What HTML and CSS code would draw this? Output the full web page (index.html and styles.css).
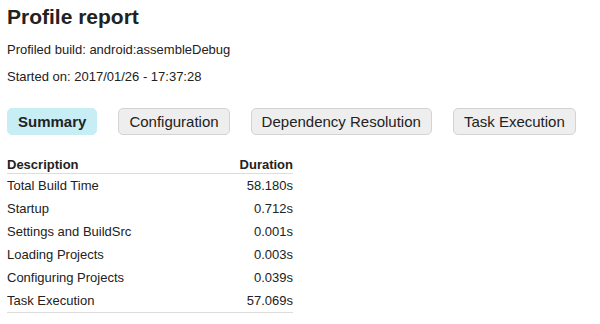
FILE: index.html
```html
<!DOCTYPE html>
<html lang="en">
<head>
  <meta charset="UTF-8" />
  <title>Profile report</title>
  <link rel="stylesheet" href="styles.css">
</head>
<body>
  <div class="report">
    <h1>Profile report</h1>
    <p class="meta">Profiled build: android:assembleDebug</p>
    <p class="meta">Started on: 2017/01/26 - 17:37:28</p>

    <div class="tabs">
      <button class="tab active">Summary</button>
      <button class="tab">Configuration</button>
      <button class="tab">Dependency Resolution</button>
      <button class="tab">Task Execution</button>
    </div>

    <table class="summary">
      <thead>
        <tr>
          <th>Description</th>
          <th class="num">Duration</th>
        </tr>
      </thead>
      <tbody>
        <tr><td>Total Build Time</td><td class="num">58.180s</td></tr>
        <tr><td>Startup</td><td class="num">0.712s</td></tr>
        <tr><td>Settings and BuildSrc</td><td class="num">0.001s</td></tr>
        <tr><td>Loading Projects</td><td class="num">0.003s</td></tr>
        <tr><td>Configuring Projects</td><td class="num">0.039s</td></tr>
        <tr><td>Task Execution</td><td class="num">57.069s</td></tr>
      </tbody>
    </table>
  </div>
</body>
</html>
```

FILE: styles.css
```css
* {
  margin: 0;
  padding: 0;
  box-sizing: border-box;
}

body {
  background: #ffffff;
  color: #222222;
  font-family: "Liberation Sans", Arial, sans-serif;
}

.report {
  padding: 5px 7px;
}

h1 {
  font-size: 21px;
  line-height: 24px;
  font-weight: bold;
  margin-bottom: 13px;
}

.meta {
  font-size: 13px;
  line-height: 16px;
  margin-bottom: 11px;
}

.meta + .tabs {
  margin-top: 23px;
}

.tabs {
  display: flex;
  gap: 21px;
}

.tab {
  font-family: inherit;
  font-size: 15px;
  line-height: 17px;
  padding: 4px 10px;
  color: #222222;
  background: #eeeeee;
  border: 1px solid #d3d3d3;
  border-radius: 5px;
}

.tab.active {
  font-weight: bold;
  background: #c8eef5;
  border-color: #c8eef5;
  padding: 4px 10px;
}

.summary {
  width: 286px;
  margin-top: 22px;
  border-collapse: collapse;
  font-size: 13px;
}

.summary th {
  text-align: left;
  font-weight: bold;
  line-height: 16px;
  border-bottom: 1px solid #dddddd;
}

.summary td {
  line-height: 23px;
}

.summary tbody tr:last-child td {
  border-bottom: 1px solid #dddddd;
}

.summary .num {
  text-align: right;
}
```
